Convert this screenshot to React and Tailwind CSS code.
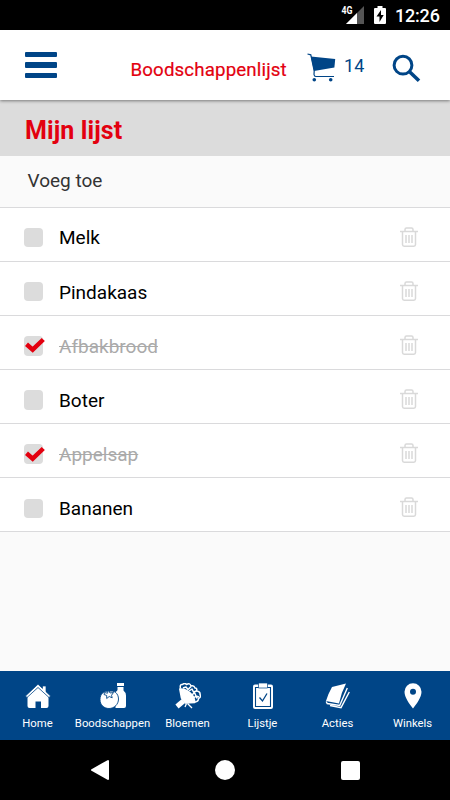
import { useState } from "react"

const startItems = [
  { id: 1, name: "Melk", done: false },
  { id: 2, name: "Pindakaas", done: false },
  { id: 3, name: "Afbakbrood", done: true },
  { id: 4, name: "Boter", done: false },
  { id: 5, name: "Appelsap", done: true },
  { id: 6, name: "Bananen", done: false },
]

function StatusBar() {
  return (
    <div className="h-[30px] bg-black flex items-center justify-end pr-2.5 text-white">
      <svg width="24" height="20" viewBox="0 0 24 20" className="mr-[9px]">
        <path d="M23 1v18H5z" fill="#555" />
        <path d="M16 8v11H5z" fill="#fff" />
        <text x="0.5" y="9" fontSize="10" fontWeight="700" fill="#fff" fontFamily="Roboto, sans-serif" textLength="11" lengthAdjust="spacingAndGlyphs">4G</text>
      </svg>
      <svg width="12" height="18" viewBox="0 0 12 18" className="mr-[9px]">
        <path d="M3.5 0h5v2H11a1 1 0 0 1 1 1v14a1 1 0 0 1-1 1H1a1 1 0 0 1-1-1V3a1 1 0 0 1 1-1h2.500z" fill="#fff" />
        <path d="M7 4 2.500 10.500H5.500v5.500L9.700 9H7z" fill="#000" />
      </svg>
      <span className="w-[45px] pt-px text-[18px] leading-none font-medium tracking-[-0.2px]">12:26</span>
    </div>
  )
}

function CartIcon() {
  return (
    <svg width="30" height="30" viewBox="0 0 30 30">
      <path d="M3.800 3.500 28.200 6l-.8 8.500L7 18z" fill="#004587" />
      <path d="M.5 1 3.800 1.800 7.200 18 7 21.500q.3 2 1.800 2H27" fill="none" stroke="#004587" strokeWidth="1.200" />
      <circle cx="7.300" cy="26.700" r="1.800" fill="#004587" />
      <circle cx="23.700" cy="26.700" r="1.800" fill="#004587" />
    </svg>
  )
}

function Header() {
  return (
    <div className="relative z-10 h-[70px] shrink-0 bg-white flex items-center shadow-[0_1px_3px_rgba(0,0,0,0.45)]">
      <button className="ml-[25px] w-8 flex flex-col gap-[5.500px]">
        <span className="h-[5.300px] w-8 rounded-[1px] bg-[#004587]" />
        <span className="h-[5.300px] w-8 rounded-[1px] bg-[#004587]" />
        <span className="h-[5.300px] w-8 rounded-[1px] bg-[#004587]" />
      </button>
      <h1 className="ml-[73.500px] mt-[9px] w-[157px] whitespace-nowrap text-[18.700px] leading-6 tracking-[0.140px] text-[#e3000f] [-webkit-text-stroke:0.2px_#e3000f]">Boodschappenlijst</h1>
      <div className="ml-[19.500px] mt-[6px] flex">
        <CartIcon />
        <span className="ml-[7px] w-[20px] pt-px text-[18px] leading-6 tracking-[0.1px] text-[#004587]">14</span>
      </div>
      <svg width="30" height="30" viewBox="0 0 30 30" className="ml-[27px] mt-[7px]">
        <circle cx="12" cy="11.200" r="8.900" fill="none" stroke="#004587" strokeWidth="3" />
        <path d="m18.300 17.500 9.700 9.300" stroke="#004587" strokeWidth="3.600" />
      </svg>
    </div>
  )
}

function TrashIcon() {
  return (
    <svg width="18" height="20" viewBox="0 0 18 20" fill="none" stroke="#d9d9d9" strokeWidth="1.500">
      <path d="M0 4.500h18M5 4V2.500Q5 1 6.500 1h5Q13 1 13 2.500V4M2.500 4.500v13q0 1.700 1.700 1.700h9.600q1.700 0 1.700-1.700v-13" />
      <path d="M6 8v8M9 8v8M12 8v8" />
    </svg>
  )
}

function ListItem({ item, onToggle, onDelete }) {
  return (
    <li className="h-[54.150px] flex items-center border-b-[1.500px] border-[#dadadc] bg-white pl-6 pr-8">
      <button onClick={onToggle} className="mt-[7px] w-[19px] h-[19.500px] rounded-[4px] bg-[#dcdcdc]">
        {item.done && (
          <svg width="22" height="19" viewBox="0 0 22 19">
            <path d="M2.500 8.200 8.700 13.700 19.300 3.500" fill="none" stroke="#e3000f" strokeWidth="4.500" />
          </svg>
        )}
      </button>
      <span className={`ml-4 mt-[8.800px] flex-1 text-[19px] leading-6 ${item.done ? "text-[#aaa] line-through" : "text-black"}`}>
        {item.name}
      </span>
      <button onClick={onDelete} className="mt-[5px]">
        <TrashIcon />
      </button>
    </li>
  )
}

function HomeIcon() {
  return (
    <svg width="26" height="26" viewBox="0 0 26 26" fill="#fff">
      <path d="M2.500 14 13 4.500 23.500 14v9q0 2-2 2H16v-6.500h-5.500V25H4.500q-2 0-2-2z" />
      <path d="M.5 13 13 1.200l4.500 4.200V3H21v5.700l4.500 4.300-1.500 1.500L13 4.500 2 14.500z" stroke="#004587" strokeWidth="0.700" />
    </svg>
  )
}

function GroceryIcon() {
  return (
    <svg width="26" height="26" viewBox="0 0 26 26" fill="#fff">
      <path d="M17 0h7v3h-7zM17.500 4h6v3.500q2.500 2 2.500 5V23q0 2-2 2h-8.500V9q1.800-1 2-2z" />
      <path d="M9 8.500c5-1.800 9.500 2 9.500 7.500S14 25.500 9 25.500 0 22 0 16.500 4 7 9 8.500" stroke="#004587" strokeWidth="0.900" />
      <path d="m4.500 9.500 3 .7L8.500 7l1.500 3 3.500-.5-2 2.800.7 2.500-3-1.300-2.500 2v-3l-2.700-1z" stroke="#004587" strokeWidth="0.900" />
    </svg>
  )
}

function FlowerIcon() {
  return (
    <svg width="26" height="26" viewBox="0 0 26 26" fill="none" stroke="#fff" strokeWidth="1.500" strokeLinejoin="round">
      <path d="M5.500 5.500Q4.500 1 7.500 1.500 10-.5 11.500 1.500 15-.5 16 3q3-1 4 2 2.500 0 1.500 3 4 .5 3.500 3.500 1.500 2.500-1.500 4 0 3-3.500 3.500" />
      <path d="m8 5 3-1 2 2.500 3-3M14 8l3-2 1.500 3 3-1M17 12l2.500-2.500L21 13l3 1M18.500 15l2.500-2 1 2.500" />
      <path d="M4.800 6Q10 5.500 15 9.700q5 4.300 4.700 9.800L10.500 20 6.500 15z" fill="#fff" />
      <path d="m8.500 18-6.500 5.500" strokeWidth="5" />
      <path d="M11.500 20.500 10 24M12.500 20.500l4.500 4.500" strokeWidth="1.300" />
    </svg>
  )
}

function ListIcon() {
  return (
    <svg width="26" height="26" viewBox="0 0 26 26" fill="none">
      <rect x="3" y="1.500" width="20" height="24.500" rx="2" fill="#fff" />
      <path d="M5.500 4.500h15V23.500h-15z" stroke="#004587" strokeWidth="1.100" />
      <path d="M8.500 0h9v5h-9z" fill="#fff" stroke="#004587" strokeWidth="0.700" />
      <path d="m9.500 14.500 3 3.500 4.500-7.500" stroke="#004587" strokeWidth="1.300" />
    </svg>
  )
}

function BookIcon() {
  return (
    <svg width="26" height="26" viewBox="0 0 26 26" fill="none">
      <path d="M7 4 21 .5q-5 9.500-7 20L1 18Q3 11 7 4" fill="#fff" />
      <path d="m1.200 18.500 1 2 12.500 2L22.300 5M5 22.500l11 2.200L24.300 9" stroke="#fff" strokeWidth="1.400" />
    </svg>
  )
}

function PinIcon() {
  return (
    <svg width="26" height="26" viewBox="0 0 26 26" fill="#fff">
      <path fillRule="evenodd" d="M13 .2a8.500 8.500 0 0 0-8.500 8.500C4.500 14 9 20.500 13 25.500c4-5 8.500-11.500 8.500-16.800A8.500 8.500 0 0 0 13 .2m0 5.500a3 3 0 1 1 0 6 3 3 0 0 1 0-6" />
    </svg>
  )
}

const tabs = [
  { label: "Home", Icon: HomeIcon },
  { label: "Boodschappen", Icon: GroceryIcon },
  { label: "Bloemen", Icon: FlowerIcon },
  { label: "Lijstje", Icon: ListIcon },
  { label: "Acties", Icon: BookIcon },
  { label: "Winkels", Icon: PinIcon },
]

export default function App() {
  const [items, setItems] = useState(startItems)

  const toggle = (id) => {
    setItems(items.map((i) => (i.id === id ? { ...i, done: !i.done } : i)))
  }

  return (
    <div className="h-screen w-full flex flex-col overflow-hidden bg-[#fafafa] font-[Roboto,sans-serif]">
      <StatusBar />
      <Header />

      <h2 className="h-14 bg-[#dcdcdc] pl-[25px] pt-[15px] text-[25px] leading-8 font-bold text-[#e3000f] tracking-[0.1px]">Mijn lijst</h2>
      <div className="h-[51.500px] border-b-[1.500px] border-[#dadadc] pl-[27.500px] pt-[13px] text-[19px] leading-6 text-[#333]">Voeg toe</div>

      <ul className="flex-1">
        {items.map((item) => (
          <ListItem
            key={item.id}
            item={item}
            onToggle={() => toggle(item.id)}
            onDelete={() => setItems(items.filter((i) => i.id !== item.id))}
          />
        ))}
      </ul>

      {/* TABS */}
      <nav className="h-[69px] shrink-0 grid grid-cols-6 bg-[#004587] text-white">
        {tabs.map(({ label, Icon }) => (
          <button key={label} className="flex flex-col items-center pt-3">
            <Icon />
            <span className="mt-[7px] text-[11.300px] leading-4">{label}</span>
          </button>
        ))}
      </nav>

      {/* ANDROID BUTTONS */}
      <div className="h-[60px] shrink-0 bg-black grid grid-cols-3 items-center px-[37px]">
        <svg width="20" height="22" viewBox="0 0 20 22" className="justify-self-center">
          <path d="M18 2v18L2 11z" fill="#fff" stroke="#fff" strokeWidth="2" strokeLinejoin="round" />
        </svg>
        <span className="justify-self-center w-5 h-5 rounded-full bg-white" />
        <span className="justify-self-center w-[19px] h-[19px] rounded-[2px] bg-white" />
      </div>
    </div>
  )
}
